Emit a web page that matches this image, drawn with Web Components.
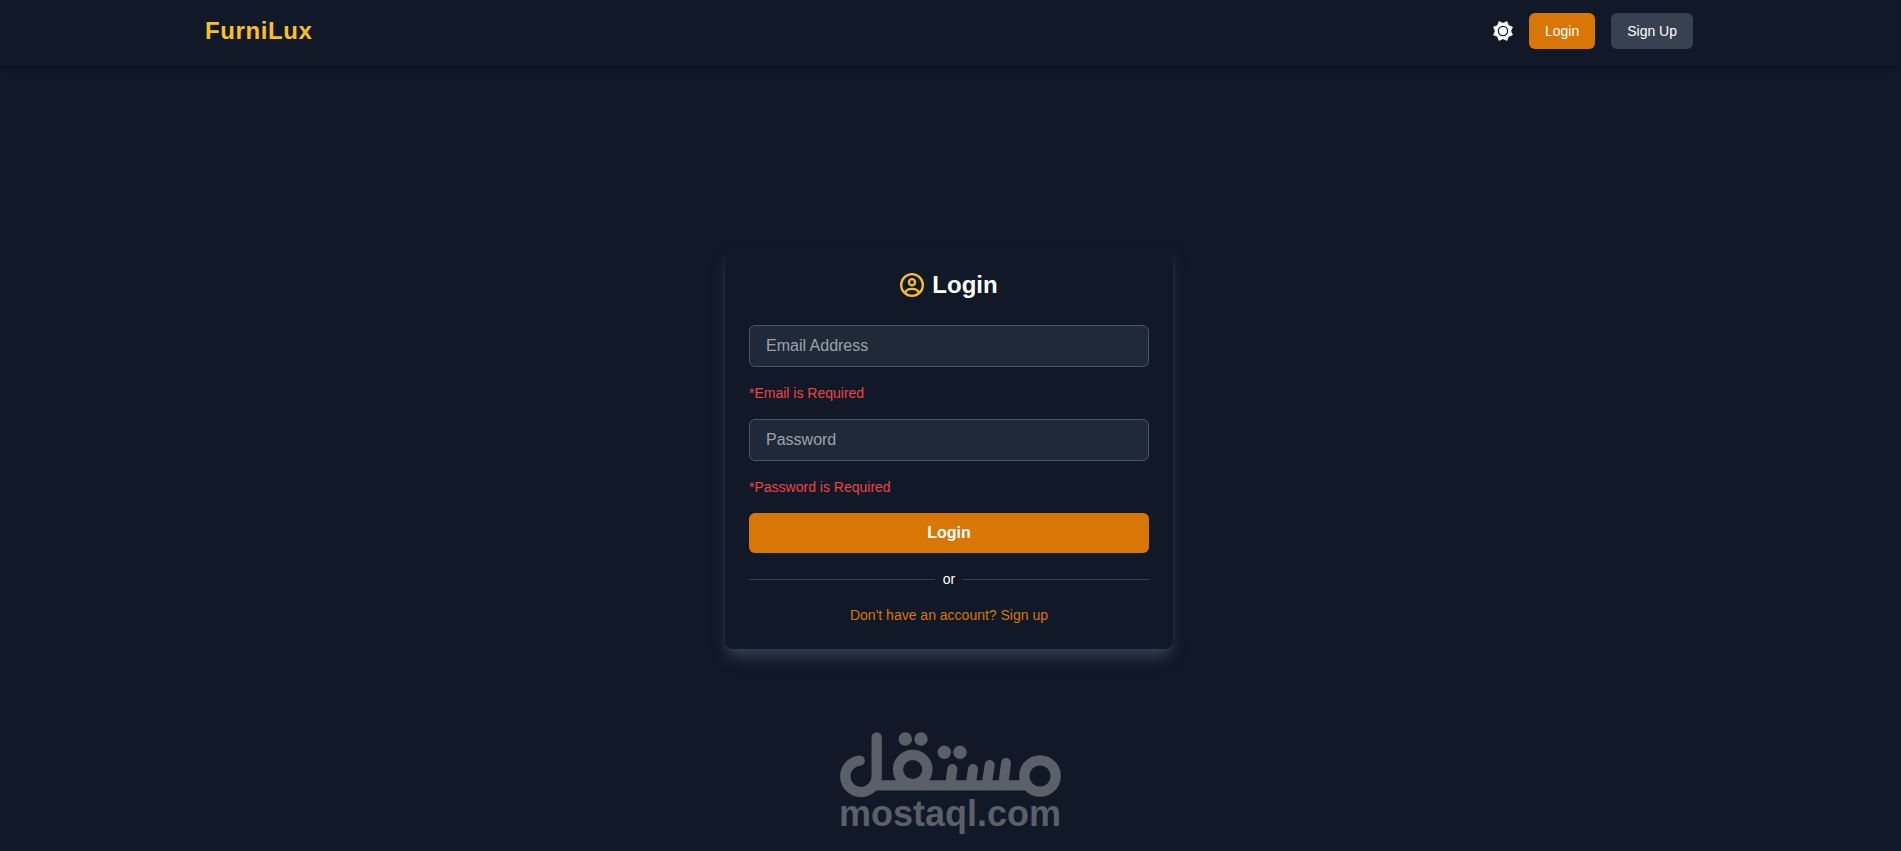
<!DOCTYPE html>
<html lang="en">
<head>
<meta charset="utf-8">
<meta name="viewport" content="width=device-width, initial-scale=1">
<title>FurniLux</title>
<style>
    body {
        margin: 0;
        background: #111827;
        color: #fff;
        font-family: "Liberation Sans", Arial, sans-serif;
    }
</style>
</head>
<body>
<furni-app>
    <furni-navbar slot="header" brand="FurniLux"></furni-navbar>
    <login-card>
        <form-field name="email" type="email" label="Email Address" error="*Email is Required"></form-field>
        <form-field name="password" type="password" label="Password" error="*Password is Required"></form-field>
    </login-card>
    <mostaql-mark slot="footer"></mostaql-mark>
</furni-app>

<script>
class furniElement extends HTMLElement {
    constructor() {
        super();
        this.attachShadow({mode: 'open'});
    }

    getTemplate() {
        const template = document.createElement("template");
        template.innerHTML = `${this.getStyles()}${this.getMarkup()}`;
        return template;
    }

    render() {
        this.shadowRoot.replaceChildren(this.getTemplate().content.cloneNode(true));
    }

    connectedCallback() {
        this.render();
    }
}

class furniApp extends furniElement {
    getMarkup() {
        return `
            <slot name="header"></slot>
            <main><slot></slot></main>
            <footer><slot name="footer"></slot></footer>
        `;
    }

    getStyles() {
        return `
        <style>
            :host {
                --primary-color: #d97706;
                --accent-color: #fbbf24;
                --page-color: #111827;
                --field-color: #1f2937;
                --border-color: #4b5563;
                --line-color: #374151;
                --muted-color: #9ca3af;
                --error-color: #ef4444;
                --text-sm: 14px;
                --text-md: 16px;
                --text-xl: 24px;
                display: flex;
                flex-direction: column;
                min-height: 100vh;
                box-sizing: border-box;
                padding-right: 3px;
            }
            main {
                display: flex;
                flex: 1;
                align-items: flex-end;
                justify-content: center;
                padding: 16px;
            }
            footer {
                display: flex;
                justify-content: center;
                padding: 64px 0 16px;
            }
        </style>
        `;
    }
}

class furniNavbar extends furniElement {
    getMarkup() {
        return `
            <nav>
                <a class="brand" href="#">${this.getAttribute("brand")}</a>
                <div class="actions">
                    <button class="theme" type="button" aria-label="Toggle theme">
                        <svg viewBox="0 0 20 20" width="20" height="20" aria-hidden="true">
                            <path fill="currentColor" stroke="currentColor" stroke-width=".6" stroke-linejoin="round" d="M14 .5 15.500 4.500 19.500 6 17.800 10 19.500 14 15.500 15.500 14 19.500 10 17.800 6 19.500 4.500 15.500 .5 14 2.200 10 .5 6 4.500 4.500 6 .5 10 2.200Z"/>
                            <circle cx="10" cy="10" r="4.600" fill="currentColor" stroke="#111827" stroke-width="1.300"/>
                        </svg>
                    </button>
                    <a class="btn login" href="#login">Login</a>
                    <a class="btn" href="#signup">Sign Up</a>
                </div>
            </nav>
        `;
    }

    getStyles() {
        return `
        <style>
            :host {
                display: block;
                box-shadow: 0 4px 6px -1px rgb(0 0 0 / 0.1), 0 2px 4px -2px rgb(0 0 0 / 0.1);
            }
            nav {
                display: flex;
                align-items: center;
                justify-content: space-between;
                box-sizing: border-box;
                max-width: 1536px;
                margin: 0 auto;
                padding: 13px 24px 16px;
            }
            .brand {
                color: var(--accent-color);
                font-size: var(--text-xl);
                line-height: 32px;
                font-weight: 700;
                letter-spacing: 0.025em;
                text-decoration: none;
            }
            .actions {
                display: flex;
                align-items: center;
                gap: 16px;
            }
            .theme {
                display: flex;
                padding: 0;
                border: 0;
                background: none;
                color: #fff;
            }
            .btn {
                padding: 8px 16px;
                border-radius: 6px;
                background: var(--line-color);
                color: #fff;
                font-size: var(--text-sm);
                line-height: 20px;
                text-decoration: none;
            }
            .btn.login {
                background: var(--primary-color);
            }
        </style>
        `;
    }
}

class loginCard extends furniElement {
    getMarkup() {
        return `
            <h2>
                <svg viewBox="0 0 24 24" width="24" height="24" aria-hidden="true">
                    <g fill="none" stroke="currentColor" stroke-width="2.300">
                        <circle cx="12" cy="12" r="10.850"/>
                        <circle cx="12" cy="9.300" r="3.100"/>
                        <path d="M5 20C6 17 8.500 15.900 12 15.900S18 17 19 20"/>
                    </g>
                </svg>
                Login
            </h2>
            <form novalidate>
                <slot></slot>
                <button type="button">Login</button>
            </form>
            <div class="divider"><span>or</span></div>
            <a href="#signup">Don't have an account? Sign up</a>
        `;
    }

    getStyles() {
        return `
        <style>
            :host {
                display: flex;
                flex-direction: column;
                box-sizing: border-box;
                width: 100%;
                max-width: 448px;
                padding: 24px;
                border-radius: 8px;
                background: var(--page-color);
                box-shadow: 0 10px 15px -3px #334155, 0 4px 6px -4px #334155;
            }
            h2 {
                display: flex;
                align-items: center;
                justify-content: center;
                gap: 8px;
                margin: 0 0 24px;
                font-size: var(--text-xl);
                line-height: 32px;
            }
            svg {
                color: var(--accent-color);
            }
            form {
                display: flex;
                flex-direction: column;
                gap: 16px;
            }
            button {
                padding: 8px;
                border: 0;
                border-radius: 6px;
                background: var(--primary-color);
                color: #fff;
                font: 700 var(--text-md)/24px "Liberation Sans", Arial, sans-serif;
            }
            .divider {
                display: flex;
                align-items: center;
                gap: 8px;
                margin: 16px 0;
                font-size: var(--text-sm);
                line-height: 20px;
            }
            .divider::before,
            .divider::after {
                content: "";
                flex: 1;
                height: 1px;
                background: var(--line-color);
            }
            a {
                align-self: center;
                color: var(--primary-color);
                font-size: var(--text-sm);
                line-height: 20px;
                text-decoration: none;
            }
        </style>
        `;
    }
}

class formField extends furniElement {
    getMarkup() {
        const name = this.getAttribute("name");
        const label = this.getAttribute("label");
        return `
            <input id="${name}" name="${name}" type="${this.getAttribute("type")}"
                placeholder="${label}" aria-label="${label}" aria-describedby="error">
            <p id="error">${this.getAttribute("error")}</p>
        `;
    }

    getStyles() {
        return `
        <style>
            :host {
                display: flex;
                flex-direction: column;
                gap: 16px;
            }
            input {
                box-sizing: border-box;
                width: 100%;
                padding: 8px 16px;
                border: 1px solid var(--border-color);
                border-radius: 6px;
                background: var(--field-color);
                color: #fff;
                font: var(--text-md)/24px "Liberation Sans", Arial, sans-serif;
            }
            input::placeholder {
                color: var(--muted-color);
            }
            p {
                margin: 0;
                color: var(--error-color);
                font-size: var(--text-sm);
                line-height: 20px;
            }
        </style>
        `;
    }
}

class mostaqlMark extends furniElement {
    getMarkup() {
        return `
            <svg viewBox="-4 -2 228 106" width="228" height="106" role="img" aria-label="mostaql.com">
                <g fill="none" stroke="currentColor" stroke-width="10.300" stroke-linecap="round">
                    <path d="M20.700 29.700A15.700 15.700 0 1 0 37.700 45V6.500"/>
                    <path d="M36 54.300H190" stroke-linecap="butt"/>
                    <circle cx="73.700" cy="38.500" r="14.700"/>
                    <circle cx="201" cy="45" r="15.700"/>
                    <path stroke-width="10" d="M113.300 38 111.500 52M134 38 132 52M150.700 34 148 52M167 32 164.500 52"/>
                </g>
                <g fill="currentColor">
                    <circle cx="66.300" cy="8" r="6.700"/>
                    <circle cx="82" cy="8" r="6.700"/>
                    <circle cx="105.300" cy="21.300" r="6.700"/>
                    <circle cx="121" cy="21.300" r="6.700"/>
                </g>
                <text x="111" y="95" text-anchor="middle" fill="currentColor">mostaql.com</text>
            </svg>
        `;
    }

    getStyles() {
        return `
        <style>
            :host {
                display: block;
                color: #5b5f68;
            }
            svg {
                display: block;
            }
            text {
                font: 700 36px "Liberation Sans", Arial, sans-serif;
            }
        </style>
        `;
    }
}

customElements.define("furni-app", furniApp);
customElements.define("furni-navbar", furniNavbar);
customElements.define("login-card", loginCard);
customElements.define("form-field", formField);
customElements.define("mostaql-mark", mostaqlMark);
</script>
</body>
</html>
